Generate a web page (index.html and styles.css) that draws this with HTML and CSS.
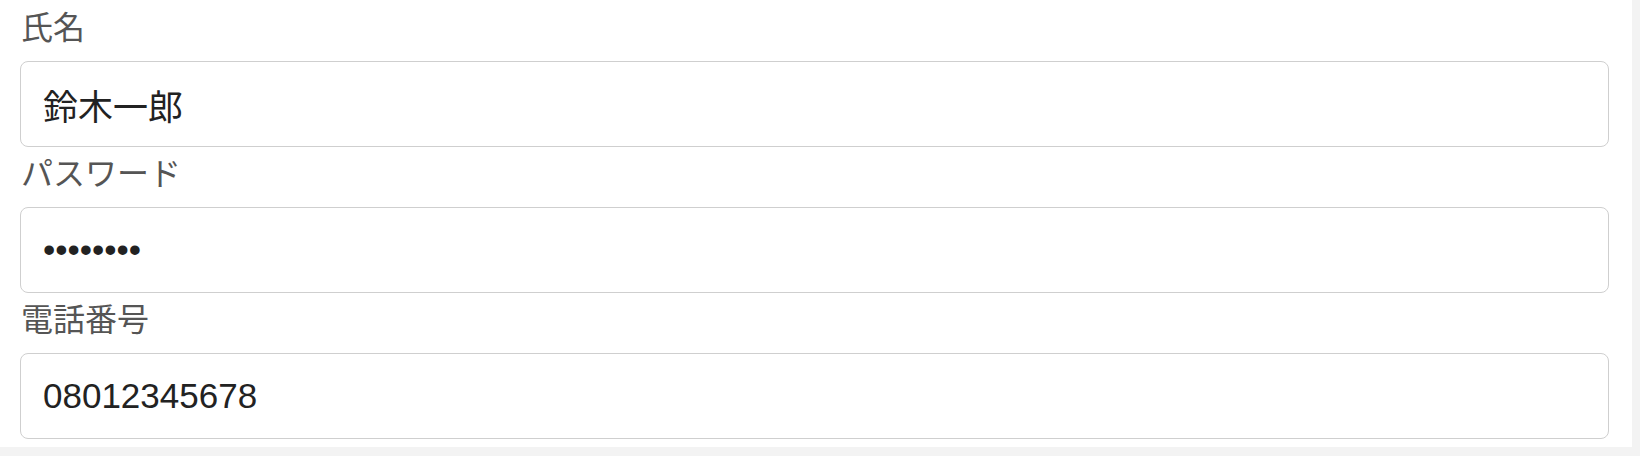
FILE: index.html
```html
<!DOCTYPE html>
<html lang="ja">
<head>
<meta charset="utf-8">
<title>フォーム</title>
<link rel="stylesheet" href="styles.css">
</head>
<body>
<form class="panel">
  <div class="group">
    <label class="label" for="name">氏名</label>
    <input class="field" id="name" type="text" value="鈴木一郎">
  </div>
  <div class="group">
    <label class="label" for="pw">パスワード</label>
    <input class="field" id="pw" type="password" value="12345678">
  </div>
  <div class="group">
    <label class="label" for="tel">電話番号</label>
    <input class="field" id="tel" type="tel" value="08012345678">
  </div>
</form>
</body>
</html>
```
FILE: styles.css
```css
html, body {
  margin: 0;
  padding: 0;
  background: #f3f3f3;
}
body {
  width: 1640px;
  height: 456px;
  overflow: hidden;
}
.panel {
  box-sizing: border-box;
  width: 1632px;
  height: 447px;
  background: #ffffff;
  padding: 1px 23px 0 20px;
  display: flex;
  flex-direction: column;
}
.group {
  display: flex;
  flex-direction: column;
}
.label {
  display: block;
  font-family: "Liberation Sans", "Noto Sans CJK JP", sans-serif;
  font-size: 32px;
  line-height: 54px;
  height: 54px;
  margin-bottom: 6px;
  color: #555555;
  padding-left: 1px;
}
.field {
  box-sizing: border-box;
  width: 100%;
  height: 86px;
  margin: 0;
  padding: 0 21px 0 22px;
  border: 1px solid #cfcfcf;
  border-radius: 8px;
  background: #ffffff;
  font-family: "Liberation Sans", "Noto Sans CJK JP", sans-serif;
  font-size: 35px;
  color: #222222;
  outline: none;
}
```
